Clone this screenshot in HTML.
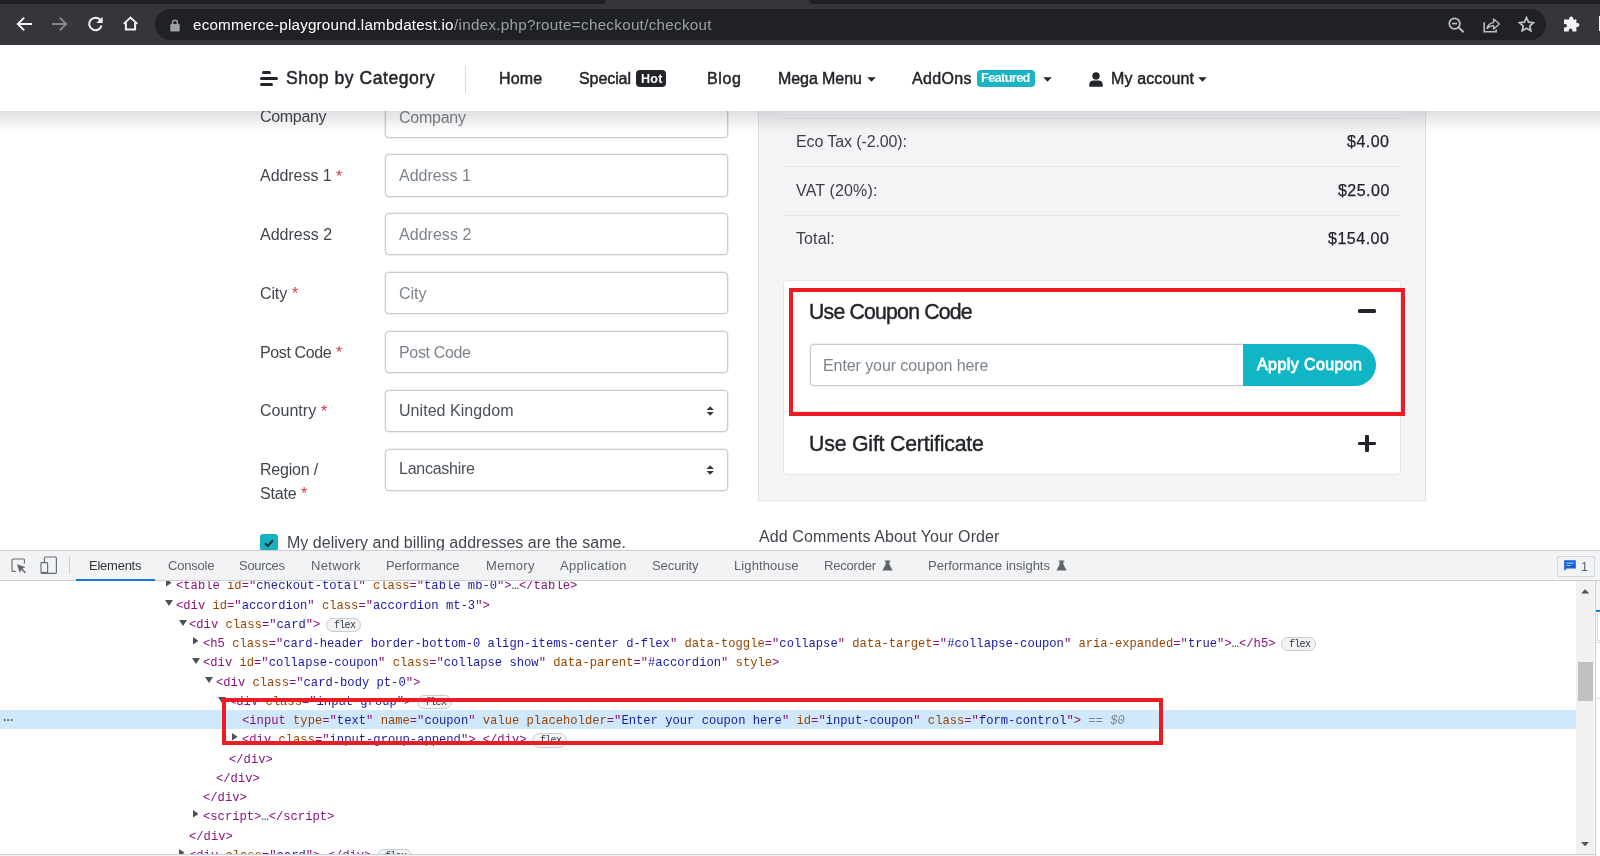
<!DOCTYPE html>
<html lang="en">
<head>
<meta charset="utf-8">
<title>Checkout</title>
<style>
html,body{margin:0;padding:0;background:#fff;}
body{width:1600px;height:856px;overflow:hidden;font-family:"Liberation Sans",sans-serif;}
#root{position:relative;width:1600px;height:856px;overflow:hidden;background:#fff;}
.t{will-change:transform;}
#root div,#root svg{position:absolute;box-sizing:border-box;}
.t{position:absolute;white-space:pre;font-family:"Liberation Sans",sans-serif;}
.inp{left:385px;width:343.3px;height:42.2px;border:1px solid #c6ccd3;border-radius:4px;background:#fff;box-shadow:0 0 0 .5px rgba(198,204,211,.6);}
.hl{left:783px;width:618px;height:1px;background:#e1e3e6;}
.pill{height:14.5px;border:1px solid #c9ccd0;border-radius:8px;background:#f1f3f4;}
</style>
</head>
<body>
<div id="root">
<!-- ===== page content (below nav) ===== -->
<!-- left form inputs -->
<div class="inp" style="top:95.5px"></div>
<div class="inp" style="top:154.4px"></div>
<div class="inp" style="top:213.3px"></div>
<div class="inp" style="top:272.1px"></div>
<div class="inp" style="top:331.0px"></div>
<div class="inp" style="top:389.6px"></div>
<div class="inp" style="top:448.7px"></div>
<!-- select arrows -->
<svg style="left:706.1px;top:405.7px" width="8.4" height="10" viewBox="0 0 10 12"><path d="M0.6 4.9 L5 0.4 L9.4 4.9 Z M0.6 7.1 L5 11.6 L9.4 7.1 Z" fill="#343a40"/></svg>
<svg style="left:706.1px;top:464.6px" width="8.4" height="10" viewBox="0 0 10 12"><path d="M0.6 4.9 L5 0.4 L9.4 4.9 Z M0.6 7.1 L5 11.6 L9.4 7.1 Z" fill="#343a40"/></svg>
<!-- checkbox -->
<div style="left:260px;top:533.5px;width:17.5px;height:17.5px;border-radius:3px;background:#18b1c4;"></div>
<svg style="left:260px;top:533.5px" width="18" height="18" viewBox="0 0 18 18"><path d="M5 9.2 L7.8 12 L13 6.2" fill="none" stroke="#16323a" stroke-width="2.2"/></svg>

<!-- right summary panel -->
<div style="left:758px;top:90px;width:668px;height:411px;background:#f4f4f6;border:1px solid #e1e3e7;"></div>
<div class="hl" style="top:118px"></div>
<div class="hl" style="top:166px"></div>
<div class="hl" style="top:215px"></div>
<!-- accordion card -->
<div style="left:783px;top:280.3px;width:618px;height:195.2px;background:#fff;border:1px solid #e4e6e9;border-radius:4px;"></div>
<div style="left:783px;top:411px;width:618px;height:1px;background:#e1e3e6;"></div>
<!-- minus / plus -->
<div style="left:1358px;top:308.8px;width:18px;height:4.4px;border-radius:1.5px;background:#212529;"></div>
<div style="left:1358.2px;top:441.6px;width:17.6px;height:3.8px;border-radius:1.2px;background:#212529;"></div>
<div style="left:1365.1px;top:434.7px;width:3.8px;height:17.6px;border-radius:1.2px;background:#212529;"></div>
<!-- coupon input + button -->
<div style="left:809.5px;top:344px;width:434.5px;height:42px;border:1px solid #c6ccd3;border-radius:4px 0 0 4px;background:#fff;box-shadow:0 0 0 .5px rgba(198,204,211,.6);"></div>
<div style="left:1243px;top:343.6px;width:133px;height:42.6px;border-radius:0 21.3px 21.3px 0;background:#10b6c6;"></div>
<!-- red highlight rect (page) -->
<div style="left:788.8px;top:288.1px;width:616.2px;height:128px;border:4px solid #ed1c24;"></div>

<!-- ===== nav header ===== -->
<div style="left:0;top:0;width:1600px;height:140px;z-index:3;pointer-events:none;">
<div style="left:0;top:111px;width:1600px;height:23px;background:linear-gradient(to bottom,rgba(30,36,48,.17) 0,rgba(30,36,48,.125) 1.2px,rgba(30,36,48,.115) 5px,rgba(30,36,48,.075) 10px,rgba(30,36,48,.035) 16px,rgba(30,36,48,.012) 20px,rgba(30,36,48,0) 23px);"></div>
<div style="left:0;top:44px;width:1600px;height:67px;background:#fff;"></div>
<!-- menu icon -->
<div style="left:261.5px;top:71.2px;width:9px;height:3.2px;border-radius:1.6px;background:#212529;"></div>
<div style="left:259.5px;top:77px;width:18px;height:3.2px;border-radius:1.6px;background:#212529;"></div>
<div style="left:259.5px;top:82.8px;width:13.5px;height:3.2px;border-radius:1.6px;background:#212529;"></div>
<div style="left:464.5px;top:65.5px;width:1px;height:27px;background:#d5d8dc;"></div>
<!-- badges -->
<div style="left:635.8px;top:70px;width:30.4px;height:17.2px;border-radius:4px;background:#212529;"></div>
<div style="left:976.7px;top:70px;width:58.5px;height:17.4px;border-radius:4px;background:#19b4c6;"></div>
<!-- carets -->
<svg style="left:867px;top:77px" width="9" height="5" viewBox="0 0 9 5"><path d="M0.3 0.3 H8.7 L4.5 4.8 Z" fill="#212529"/></svg>
<svg style="left:1043.3px;top:77px" width="9" height="5" viewBox="0 0 9 5"><path d="M0.3 0.3 H8.7 L4.5 4.8 Z" fill="#212529"/></svg>
<svg style="left:1198px;top:77px" width="9" height="5" viewBox="0 0 9 5"><path d="M0.3 0.3 H8.7 L4.5 4.8 Z" fill="#212529"/></svg>
<!-- user icon -->
<svg style="left:1088.5px;top:71.5px" width="14" height="15" viewBox="0 0 14 15"><circle cx="7" cy="3.9" r="3.7" fill="#212529"/><path d="M0.3 14.8 V12.3 C0.3 9.7 2.2 8.4 4.2 8.4 H9.8 C11.8 8.4 13.7 9.7 13.7 12.3 V14.8 Z" fill="#212529"/></svg>

<!-- ===== browser toolbar ===== -->
<div style="left:0;top:0;width:1600px;height:45px;background:#35363a;"></div>
<div style="left:0;top:0;width:606px;height:3.5px;background:#202124;border-radius:0 0 4px 0;"></div>
<div style="left:809px;top:0;width:791px;height:3.5px;background:#202124;border-radius:0 0 0 4px;"></div>
<div style="left:155px;top:9px;width:1391px;height:31px;border-radius:15.5px;background:#202124;"></div>
<!-- back -->
<svg style="left:16.3px;top:15.8px" width="17" height="16" viewBox="0 0 17 16"><path d="M16 8 H2.6 M8.2 1.6 L1.8 8 L8.2 14.4" fill="none" stroke="#f1f3f4" stroke-width="2"/></svg>
<!-- forward -->
<svg style="left:51px;top:15.8px" width="17" height="16" viewBox="0 0 17 16"><path d="M1 8 H14.4 M8.8 1.6 L15.2 8 L8.8 14.4" fill="none" stroke="#85888c" stroke-width="2"/></svg>
<!-- reload -->
<svg style="left:87px;top:16px" width="17" height="16" viewBox="0 0 17 16"><path d="M13.6 4.2 A6.3 6.3 0 1 0 14.6 9.6" fill="none" stroke="#f1f3f4" stroke-width="2"/><path d="M15.6 0.8 V7 H9.4 Z" fill="#f1f3f4"/></svg>
<!-- home -->
<svg style="left:123.3px;top:16.3px" width="15" height="15" viewBox="0 0 15 15"><path d="M0.7 7.9 L7.5 1.5 L14.3 7.9" fill="none" stroke="#f1f3f4" stroke-width="1.9"/><path d="M2.9 6.6 V13.6 H12.1 V6.6" fill="none" stroke="#f1f3f4" stroke-width="2"/></svg>
<!-- lock -->
<svg style="left:170px;top:18.5px" width="10" height="13" viewBox="0 0 10 13"><rect x="0.3" y="5" width="9.4" height="7.6" rx="1.2" fill="#9aa0a6"/><path d="M2.6 5.4 V3.6 A2.4 2.4 0 0 1 7.4 3.6 V5.4" fill="none" stroke="#9aa0a6" stroke-width="1.5"/></svg>
<!-- zoom-out magnifier -->
<svg style="left:1447.5px;top:16.5px" width="17" height="16" viewBox="0 0 17 16"><circle cx="6.6" cy="6.6" r="5.3" fill="none" stroke="#bdc1c6" stroke-width="1.7"/><path d="M10.6 10.4 L15.6 15.2" stroke="#bdc1c6" stroke-width="1.9"/><path d="M4 6.6 H9.2" stroke="#bdc1c6" stroke-width="1.6"/></svg>
<!-- share -->
<svg style="left:1483px;top:16.5px" width="18" height="16" viewBox="0 0 18 16"><path d="M1.2 5.2 V14.8 H13.2 V12.6" fill="none" stroke="#bdc1c6" stroke-width="1.5"/><path d="M4 11.6 C4.6 8 7 6 10.6 5.6 V2 L16.4 7 L10.6 12 V8.6 C7.8 8.6 5.6 9.6 4 11.6 Z" fill="none" stroke="#bdc1c6" stroke-width="1.4" stroke-linejoin="round"/></svg>
<!-- star -->
<svg style="left:1518.4px;top:16.3px" width="17" height="16" viewBox="0 0 18 17"><path d="M9 1.8 L11.2 6.6 L16.4 7.1 L12.5 10.6 L13.6 15.7 L9 13 L4.4 15.7 L5.5 10.6 L1.6 7.1 L6.8 6.6 Z" fill="none" stroke="#bdc1c6" stroke-width="1.9" stroke-linejoin="miter"/></svg>
<!-- puzzle -->
<svg style="left:1563px;top:16px" width="17" height="16" viewBox="0 0 17 16"><path d="M6.2 2.4 A2 2 0 0 1 10.2 2.4 V3.4 H13.4 V7 H14.4 A2 2 0 0 1 14.4 11 H13.4 V15.6 H9.4 V14.4 A1.8 1.8 0 0 0 5.8 14.4 V15.6 H1 V11.6 H2.2 A1.8 1.8 0 0 0 2.2 8 H1 V3.4 H6.2 Z" fill="#f1f3f4"/></svg>
<div style="left:1598.6px;top:16px;width:2px;height:15px;background:#f1f3f4;"></div>

</div>
<!-- ===== devtools ===== -->
<div style="left:0;top:550px;width:1600px;height:306px;background:#fff;"></div>
<div style="left:0;top:550px;width:1600px;height:31px;background:#f1f3f4;border-top:1px solid #cbcdd1;border-bottom:1px solid #cbcdd1;z-index:2;"></div>
<!-- inspect icons -->
<svg style="left:11px;top:558px;z-index:3" width="16" height="16" viewBox="0 0 16 16"><path d="M13.4 5.6 V2 A1 1 0 0 0 12.4 1 H2 A1 1 0 0 0 1 2 V12.4 A1 1 0 0 0 2 13.4 H4.6" fill="none" stroke="#6a6e73" stroke-width="1.15"/><path d="M5.9 6.2 L14.6 9.2 L11.3 10.5 L15 14.2 L13.9 15.3 L10.2 11.6 L8.9 14.9 Z" fill="#5f6368"/></svg>
<svg style="left:40px;top:556px;z-index:3" width="18" height="19" viewBox="0 0 18 19"><rect x="4.4" y="1" width="12" height="16.4" rx="1" fill="none" stroke="#6a6e73" stroke-width="1.15"/><rect x="1" y="6.6" width="6.6" height="10.8" rx="0.9" fill="#f1f3f4" stroke="#6a6e73" stroke-width="1.15"/><path d="M1 16.6 H7.6" stroke="#6a6e73" stroke-width="1.4"/></svg>
<div style="left:69px;top:557px;z-index:3;width:1px;height:17px;background:#cbcdd1;"></div>
<div style="left:76px;top:579.4px;z-index:3;width:79px;height:1.6px;background:#1a73e8;"></div>
<!-- flasks -->
<svg style="left:881.5px;top:560px;z-index:3" width="11" height="11" viewBox="0 0 11 11"><path d="M2.6 0.4 H8.4 V1.6 H7.4 V4.4 L10.6 10.6 H0.4 L3.6 4.4 V1.6 H2.6 Z" fill="#5f6368"/></svg>
<svg style="left:1056px;top:560px;z-index:3" width="11" height="11" viewBox="0 0 11 11"><path d="M2.6 0.4 H8.4 V1.6 H7.4 V4.4 L10.6 10.6 H0.4 L3.6 4.4 V1.6 H2.6 Z" fill="#5f6368"/></svg>
<!-- issues badge -->
<div style="left:1556.5px;top:555.5px;z-index:3;width:38px;height:21px;border:1px solid #d3d6da;border-radius:2px;background:#f1f3f4;"></div>
<svg style="left:1563.5px;top:560.3px;z-index:3" width="12" height="11" viewBox="0 0 12 11"><path d="M0.2 0.2 H11.8 V8.4 H2.6 L0.2 10.9 Z" fill="#1a5fe0"/><path d="M2.4 3.1 H9.6 M2.4 5.5 H7" stroke="#9fc0f7" stroke-width="1.2"/></svg>

<!-- selected row -->
<div style="left:0;top:710px;width:1576.5px;height:18.7px;background:#cfe8fc;"></div>
<!-- scrollbar -->
<div style="left:1576.2px;top:581px;width:18.3px;height:273px;background:#f1f1f1;"></div>
<div style="left:1578px;top:662px;width:15px;height:38.5px;background:#c1c1c1;"></div>
<svg style="left:1581.3px;top:589.4px" width="8.2" height="4.4" viewBox="0 0 9 5"><path d="M0 5 L4.5 0.2 L9 5 Z" fill="#505050"/></svg>
<svg style="left:1581.3px;top:841.8px" width="8.2" height="4.4" viewBox="0 0 9 5"><path d="M0 0 L4.5 4.8 L9 0 Z" fill="#505050"/></svg>
<!-- right sliver pane -->
<div style="left:1594.5px;top:581px;width:6px;height:275px;background:#fff;border-left:1px solid #cbcdd1;"></div>
<div style="left:1595.5px;top:581px;width:5px;height:29px;background:#f1f3f4;"></div>
<div style="left:1595.5px;top:609.5px;width:5px;height:2px;background:#1a73e8;"></div>
<div style="left:1596.5px;top:613px;width:4px;height:28px;background:#fff;border:1px solid #d8dadd;border-right:0;"></div>
<div style="left:1595.5px;top:641.5px;width:5px;height:1px;background:#d8dadd;"></div>
<div style="left:1595.5px;top:698px;width:5px;height:1px;background:#d8dadd;"></div>
<div style="left:0;top:854px;width:1595px;height:2px;background:#f1f3f4;border-top:1px solid #cdd0d5;z-index:2;"></div>

<svg style="left:166.2px;top:579.2px" width="5.6" height="7.6" viewBox="0 0 6 8"><path d="M0 0 V8 L6 4 Z" fill="#4d5156"/></svg>
<svg style="left:165.4px;top:600.3px" width="8" height="6" viewBox="0 0 8 6"><path d="M0 0 H8 L4 6 Z" fill="#4d5156"/></svg>
<svg style="left:178.6px;top:619.5px" width="8" height="6" viewBox="0 0 8 6"><path d="M0 0 H8 L4 6 Z" fill="#4d5156"/></svg>
<div class="pill" style="left:326.3px;top:617.5px;width:35px;"></div>
<svg style="left:192.6px;top:637.0px" width="5.6" height="7.6" viewBox="0 0 6 8"><path d="M0 0 V8 L6 4 Z" fill="#4d5156"/></svg>
<div class="pill" style="left:1281.1px;top:636.8px;width:35px;"></div>
<svg style="left:191.8px;top:658.0px" width="8" height="6" viewBox="0 0 8 6"><path d="M0 0 H8 L4 6 Z" fill="#4d5156"/></svg>
<svg style="left:204.9px;top:677.3px" width="8" height="6" viewBox="0 0 8 6"><path d="M0 0 H8 L4 6 Z" fill="#4d5156"/></svg>
<svg style="left:218.0px;top:696.5px" width="8" height="6" viewBox="0 0 8 6"><path d="M0 0 H8 L4 6 Z" fill="#4d5156"/></svg>
<div class="pill" style="left:416.9px;top:694.5px;width:35px;"></div>
<svg style="left:232.0px;top:733.2px" width="5.6" height="7.6" viewBox="0 0 6 8"><path d="M0 0 V8 L6 4 Z" fill="#4d5156"/></svg>
<div class="pill" style="left:532.2px;top:733.0px;width:35px;"></div>
<svg style="left:192.6px;top:810.2px" width="5.6" height="7.6" viewBox="0 0 6 8"><path d="M0 0 V8 L6 4 Z" fill="#4d5156"/></svg>
<svg style="left:179.4px;top:848.8px" width="5.6" height="7.6" viewBox="0 0 6 8"><path d="M0 0 V8 L6 4 Z" fill="#4d5156"/></svg>
<div class="pill" style="left:377.4px;top:848.5px;width:35px;"></div>
<div style="left:221.9px;top:698.3px;width:941px;height:46.6px;border:4px solid #ed1c24;z-index:3;"></div>

<span class="t" style="left:193.00px;top:17.10px;font-size:15.2px;line-height:15.2px;color:#ffffff;letter-spacing:0.194px;z-index:5;">ecommerce-playground.lambdatest.io</span>
<span class="t" style="left:453.50px;top:17.10px;font-size:15.2px;line-height:15.2px;color:#9aa0a6;letter-spacing:0.293px;z-index:5;">/index.php?route=checkout/checkout</span>
<span class="t" style="left:286.00px;top:70.40px;font-size:17.6px;line-height:17.6px;color:#212529;letter-spacing:0.510px;z-index:4;-webkit-text-stroke:.45px #212529;">Shop by Category</span>
<span class="t" style="left:498.80px;top:70.70px;font-size:16px;line-height:16px;color:#212529;letter-spacing:0.171px;z-index:4;-webkit-text-stroke:.45px #212529;">Home</span>
<span class="t" style="left:579.00px;top:70.70px;font-size:16px;line-height:16px;color:#212529;letter-spacing:-0.081px;z-index:4;-webkit-text-stroke:.45px #212529;">Special</span>
<span class="t" style="left:640.80px;top:72.90px;font-size:12.6px;line-height:12.6px;color:#ffffff;font-weight:700;letter-spacing:0.208px;z-index:4;">Hot</span>
<span class="t" style="left:706.60px;top:70.70px;font-size:16px;line-height:16px;color:#212529;letter-spacing:0.656px;z-index:4;-webkit-text-stroke:.45px #212529;">Blog</span>
<span class="t" style="left:777.80px;top:70.70px;font-size:16px;line-height:16px;color:#212529;letter-spacing:-0.075px;z-index:4;-webkit-text-stroke:.45px #212529;">Mega Menu</span>
<span class="t" style="left:912.30px;top:70.70px;font-size:16px;line-height:16px;color:#212529;letter-spacing:0.338px;z-index:4;-webkit-text-stroke:.45px #212529;">AddOns</span>
<span class="t" style="left:981.40px;top:72.30px;font-size:12.8px;line-height:12.8px;color:#ffffff;font-weight:700;letter-spacing:-0.664px;z-index:4;">Featured</span>
<span class="t" style="left:1111.00px;top:70.70px;font-size:16px;line-height:16px;color:#212529;letter-spacing:0.121px;z-index:4;-webkit-text-stroke:.45px #212529;">My account</span>
<span class="t" style="left:260.30px;top:108.70px;font-size:16px;line-height:16px;color:#40464d;letter-spacing:-0.314px;">Company</span>
<span class="t" style="left:398.50px;top:109.70px;font-size:16px;line-height:16px;color:#7b838b;letter-spacing:-0.247px;">Company</span>
<span class="t" style="left:260.30px;top:167.70px;font-size:16px;line-height:16px;color:#40464d;letter-spacing:-0.043px;">Address 1</span>
<span class="t" style="left:336.00px;top:168.70px;font-size:16px;line-height:16px;color:#dc3545;">*</span>
<span class="t" style="left:398.50px;top:167.70px;font-size:16px;line-height:16px;color:#7b838b;letter-spacing:-0.031px;">Address 1</span>
<span class="t" style="left:260.30px;top:226.70px;font-size:16px;line-height:16px;color:#40464d;letter-spacing:0.019px;">Address 2</span>
<span class="t" style="left:398.50px;top:226.70px;font-size:16px;line-height:16px;color:#7b838b;letter-spacing:0.032px;">Address 2</span>
<span class="t" style="left:260.30px;top:285.70px;font-size:16px;line-height:16px;color:#40464d;letter-spacing:-0.121px;">City</span>
<span class="t" style="left:291.50px;top:285.70px;font-size:16px;line-height:16px;color:#dc3545;">*</span>
<span class="t" style="left:398.50px;top:285.70px;font-size:16px;line-height:16px;color:#7b838b;letter-spacing:-0.021px;">City</span>
<span class="t" style="left:260.30px;top:344.70px;font-size:16px;line-height:16px;color:#40464d;letter-spacing:-0.377px;">Post Code</span>
<span class="t" style="left:336.00px;top:344.70px;font-size:16px;line-height:16px;color:#dc3545;">*</span>
<span class="t" style="left:398.50px;top:344.70px;font-size:16px;line-height:16px;color:#7b838b;letter-spacing:-0.340px;">Post Code</span>
<span class="t" style="left:260.30px;top:402.70px;font-size:16px;line-height:16px;color:#40464d;letter-spacing:0.028px;">Country</span>
<span class="t" style="left:320.50px;top:403.70px;font-size:16px;line-height:16px;color:#dc3545;">*</span>
<span class="t" style="left:398.50px;top:402.70px;font-size:16px;line-height:16px;color:#495057;letter-spacing:0.050px;">United Kingdom</span>
<span class="t" style="left:260.30px;top:461.70px;font-size:16px;line-height:16px;color:#40464d;letter-spacing:-0.199px;">Region /</span>
<span class="t" style="left:260.30px;top:485.70px;font-size:16px;line-height:16px;color:#40464d;letter-spacing:-0.165px;">State</span>
<span class="t" style="left:301.00px;top:485.70px;font-size:16px;line-height:16px;color:#dc3545;">*</span>
<span class="t" style="left:398.50px;top:460.70px;font-size:16px;line-height:16px;color:#495057;letter-spacing:-0.253px;">Lancashire</span>
<span class="t" style="left:287.40px;top:534.70px;font-size:16px;line-height:16px;color:#40464d;letter-spacing:0.021px;">My delivery and billing addresses are the same.</span>
<span class="t" style="left:795.60px;top:133.70px;font-size:16px;line-height:16px;color:#3a3f45;letter-spacing:-0.109px;">Eco Tax (-2.00):</span>
<span class="t" style="left:795.60px;top:182.70px;font-size:16px;line-height:16px;color:#3a3f45;letter-spacing:0.152px;">VAT (20%):</span>
<span class="t" style="left:795.60px;top:230.70px;font-size:16px;line-height:16px;color:#3a3f45;letter-spacing:0.110px;">Total:</span>
<span class="t" style="left:1347.30px;top:133.70px;font-size:16px;line-height:16px;color:#212529;letter-spacing:0.488px;-webkit-text-stroke:.25px #212529;">$4.00</span>
<span class="t" style="left:1338.00px;top:182.70px;font-size:16px;line-height:16px;color:#212529;letter-spacing:0.472px;-webkit-text-stroke:.25px #212529;">$25.00</span>
<span class="t" style="left:1328.40px;top:230.70px;font-size:16px;line-height:16px;color:#212529;letter-spacing:0.509px;-webkit-text-stroke:.25px #212529;">$154.00</span>
<span class="t" style="left:809.10px;top:301.55px;font-size:21.3px;line-height:21.3px;color:#212529;letter-spacing:-0.824px;-webkit-text-stroke:.4px #212529;">Use Coupon Code</span>
<span class="t" style="left:809.10px;top:433.55px;font-size:21.3px;line-height:21.3px;color:#212529;letter-spacing:-0.201px;-webkit-text-stroke:.4px #212529;">Use Gift Certificate</span>
<span class="t" style="left:823.00px;top:357.70px;font-size:16px;line-height:16px;color:#7b838b;letter-spacing:-0.082px;">Enter your coupon here</span>
<span class="t" style="left:1257.00px;top:356.70px;font-size:16px;line-height:16px;color:#ffffff;letter-spacing:0.408px;-webkit-text-stroke:.8px #ffffff;">Apply Coupon</span>
<span class="t" style="left:758.60px;top:528.70px;font-size:16px;line-height:16px;color:#40464d;letter-spacing:0.105px;">Add Comments About Your Order</span>
<span class="t" style="left:89.00px;top:559.20px;font-size:13px;line-height:13px;color:#333639;letter-spacing:-0.243px;z-index:3;">Elements</span>
<span class="t" style="left:167.50px;top:559.20px;font-size:13px;line-height:13px;color:#5f6368;letter-spacing:-0.201px;z-index:3;">Console</span>
<span class="t" style="left:239.00px;top:559.20px;font-size:13px;line-height:13px;color:#5f6368;letter-spacing:-0.284px;z-index:3;">Sources</span>
<span class="t" style="left:310.50px;top:559.20px;font-size:13px;line-height:13px;color:#5f6368;letter-spacing:0.302px;z-index:3;">Network</span>
<span class="t" style="left:385.50px;top:559.20px;font-size:13px;line-height:13px;color:#5f6368;letter-spacing:-0.092px;z-index:3;">Performance</span>
<span class="t" style="left:485.50px;top:559.20px;font-size:13px;line-height:13px;color:#5f6368;letter-spacing:0.309px;z-index:3;">Memory</span>
<span class="t" style="left:559.50px;top:559.20px;font-size:13px;line-height:13px;color:#5f6368;letter-spacing:0.289px;z-index:3;">Application</span>
<span class="t" style="left:651.50px;top:559.20px;font-size:13px;line-height:13px;color:#5f6368;letter-spacing:-0.067px;z-index:3;">Security</span>
<span class="t" style="left:734.00px;top:559.20px;font-size:13px;line-height:13px;color:#5f6368;letter-spacing:0.097px;z-index:3;">Lighthouse</span>
<span class="t" style="left:823.50px;top:559.20px;font-size:13px;line-height:13px;color:#5f6368;letter-spacing:-0.210px;z-index:3;">Recorder</span>
<span class="t" style="left:928.00px;top:559.20px;font-size:13px;line-height:13px;color:#5f6368;letter-spacing:-0.007px;z-index:3;">Performance insights</span>
<span class="t" style="left:1580.50px;top:560.95px;font-size:12.5px;line-height:12.5px;color:#5f6368;z-index:3;">1</span>
<span class="t" style="left:3.00px;top:714.20px;font-size:12px;line-height:12px;color:#5f6368;font-weight:700;letter-spacing:-0.500px;">···</span>
<span class="t" style="left:176.25px;top:580.12px;font-size:12.17px;line-height:12.17px;color:#881280;font-family:'Liberation Mono', monospace;z-index:1;"><span style="color:#881280">&lt;table</span><span style="color:#994500"> id</span><span style="color:#881280">=&quot;</span><span style="color:#1a1aa6">checkout-total</span><span style="color:#881280">&quot;</span><span style="color:#994500"> class</span><span style="color:#881280">=&quot;</span><span style="color:#1a1aa6">table mb-0</span><span style="color:#881280">&quot;</span><span style="color:#881280">&gt;</span><span style="color:#303942">…</span><span style="color:#881280">&lt;/table</span><span style="color:#881280">&gt;</span></span>
<span class="t" style="left:176.25px;top:600.12px;font-size:12.17px;line-height:12.17px;color:#881280;font-family:'Liberation Mono', monospace;z-index:1;"><span style="color:#881280">&lt;div</span><span style="color:#994500"> id</span><span style="color:#881280">=&quot;</span><span style="color:#1a1aa6">accordion</span><span style="color:#881280">&quot;</span><span style="color:#994500"> class</span><span style="color:#881280">=&quot;</span><span style="color:#1a1aa6">accordion mt-3</span><span style="color:#881280">&quot;</span><span style="color:#881280">&gt;</span></span>
<span class="t" style="left:189.40px;top:619.12px;font-size:12.17px;line-height:12.17px;color:#881280;font-family:'Liberation Mono', monospace;z-index:1;"><span style="color:#881280">&lt;div</span><span style="color:#994500"> class</span><span style="color:#881280">=&quot;</span><span style="color:#1a1aa6">card</span><span style="color:#881280">&quot;</span><span style="color:#881280">&gt;</span></span>
<span class="t" style="left:334.00px;top:620.70px;font-size:10px;line-height:10px;color:#303942;font-family:'Liberation Mono', monospace;letter-spacing:-0.705px;z-index:1;">flex</span>
<span class="t" style="left:202.55px;top:638.12px;font-size:12.17px;line-height:12.17px;color:#881280;font-family:'Liberation Mono', monospace;z-index:1;"><span style="color:#881280">&lt;h5</span><span style="color:#994500"> class</span><span style="color:#881280">=&quot;</span><span style="color:#1a1aa6">card-header border-bottom-0 align-items-center d-flex</span><span style="color:#881280">&quot;</span><span style="color:#994500"> data-toggle</span><span style="color:#881280">=&quot;</span><span style="color:#1a1aa6">collapse</span><span style="color:#881280">&quot;</span><span style="color:#994500"> data-target</span><span style="color:#881280">=&quot;</span><span style="color:#1a1aa6">#collapse-coupon</span><span style="color:#881280">&quot;</span><span style="color:#994500"> aria-expanded</span><span style="color:#881280">=&quot;</span><span style="color:#1a1aa6">true</span><span style="color:#881280">&quot;</span><span style="color:#881280">&gt;</span><span style="color:#303942">…</span><span style="color:#881280">&lt;/h5</span><span style="color:#881280">&gt;</span></span>
<span class="t" style="left:1288.85px;top:639.70px;font-size:10px;line-height:10px;color:#303942;font-family:'Liberation Mono', monospace;letter-spacing:-0.705px;z-index:1;">flex</span>
<span class="t" style="left:202.55px;top:657.12px;font-size:12.17px;line-height:12.17px;color:#881280;font-family:'Liberation Mono', monospace;z-index:1;"><span style="color:#881280">&lt;div</span><span style="color:#994500"> id</span><span style="color:#881280">=&quot;</span><span style="color:#1a1aa6">collapse-coupon</span><span style="color:#881280">&quot;</span><span style="color:#994500"> class</span><span style="color:#881280">=&quot;</span><span style="color:#1a1aa6">collapse show</span><span style="color:#881280">&quot;</span><span style="color:#994500"> data-parent</span><span style="color:#881280">=&quot;</span><span style="color:#1a1aa6">#accordion</span><span style="color:#881280">&quot;</span><span style="color:#994500"> style</span><span style="color:#881280">&gt;</span></span>
<span class="t" style="left:215.70px;top:677.12px;font-size:12.17px;line-height:12.17px;color:#881280;font-family:'Liberation Mono', monospace;z-index:1;"><span style="color:#881280">&lt;div</span><span style="color:#994500"> class</span><span style="color:#881280">=&quot;</span><span style="color:#1a1aa6">card-body pt-0</span><span style="color:#881280">&quot;</span><span style="color:#881280">&gt;</span></span>
<span class="t" style="left:228.85px;top:696.12px;font-size:12.17px;line-height:12.17px;color:#881280;font-family:'Liberation Mono', monospace;z-index:1;"><span style="color:#881280">&lt;div</span><span style="color:#994500"> class</span><span style="color:#881280">=&quot;</span><span style="color:#1a1aa6">input-group</span><span style="color:#881280">&quot;</span><span style="color:#881280">&gt;</span></span>
<span class="t" style="left:424.55px;top:697.70px;font-size:10px;line-height:10px;color:#303942;font-family:'Liberation Mono', monospace;letter-spacing:-0.705px;z-index:1;">flex</span>
<span class="t" style="left:242.00px;top:715.12px;font-size:12.17px;line-height:12.17px;color:#881280;font-family:'Liberation Mono', monospace;z-index:1;"><span style="color:#881280">&lt;input</span><span style="color:#994500"> type</span><span style="color:#881280">=&quot;</span><span style="color:#1a1aa6">text</span><span style="color:#881280">&quot;</span><span style="color:#994500"> name</span><span style="color:#881280">=&quot;</span><span style="color:#1a1aa6">coupon</span><span style="color:#881280">&quot;</span><span style="color:#994500"> value</span><span style="color:#994500"> placeholder</span><span style="color:#881280">=&quot;</span><span style="color:#1a1aa6">Enter your coupon here</span><span style="color:#881280">&quot;</span><span style="color:#994500"> id</span><span style="color:#881280">=&quot;</span><span style="color:#1a1aa6">input-coupon</span><span style="color:#881280">&quot;</span><span style="color:#994500"> class</span><span style="color:#881280">=&quot;</span><span style="color:#1a1aa6">form-control</span><span style="color:#881280">&quot;</span><span style="color:#881280">&gt;</span><span style="color:#80868b;font-style:italic"> == $0</span></span>
<span class="t" style="left:242.00px;top:734.12px;font-size:12.17px;line-height:12.17px;color:#881280;font-family:'Liberation Mono', monospace;z-index:1;"><span style="color:#881280">&lt;div</span><span style="color:#994500"> class</span><span style="color:#881280">=&quot;</span><span style="color:#1a1aa6">input-group-append</span><span style="color:#881280">&quot;</span><span style="color:#881280">&gt;</span><span style="color:#303942">…</span><span style="color:#881280">&lt;/div</span><span style="color:#881280">&gt;</span></span>
<span class="t" style="left:539.90px;top:735.70px;font-size:10px;line-height:10px;color:#303942;font-family:'Liberation Mono', monospace;letter-spacing:-0.705px;z-index:1;">flex</span>
<span class="t" style="left:228.85px;top:754.12px;font-size:12.17px;line-height:12.17px;color:#881280;font-family:'Liberation Mono', monospace;z-index:1;"><span style="color:#881280">&lt;/div</span><span style="color:#881280">&gt;</span></span>
<span class="t" style="left:215.70px;top:773.12px;font-size:12.17px;line-height:12.17px;color:#881280;font-family:'Liberation Mono', monospace;z-index:1;"><span style="color:#881280">&lt;/div</span><span style="color:#881280">&gt;</span></span>
<span class="t" style="left:202.55px;top:792.12px;font-size:12.17px;line-height:12.17px;color:#881280;font-family:'Liberation Mono', monospace;z-index:1;"><span style="color:#881280">&lt;/div</span><span style="color:#881280">&gt;</span></span>
<span class="t" style="left:202.55px;top:811.12px;font-size:12.17px;line-height:12.17px;color:#881280;font-family:'Liberation Mono', monospace;z-index:1;"><span style="color:#881280">&lt;script</span><span style="color:#881280">&gt;</span><span style="color:#303942">…</span><span style="color:#881280">&lt;/script</span><span style="color:#881280">&gt;</span></span>
<span class="t" style="left:189.40px;top:831.12px;font-size:12.17px;line-height:12.17px;color:#881280;font-family:'Liberation Mono', monospace;z-index:1;"><span style="color:#881280">&lt;/div</span><span style="color:#881280">&gt;</span></span>
<span class="t" style="left:189.40px;top:850.12px;font-size:12.17px;line-height:12.17px;color:#881280;font-family:'Liberation Mono', monospace;z-index:1;"><span style="color:#881280">&lt;div</span><span style="color:#994500"> class</span><span style="color:#881280">=&quot;</span><span style="color:#1a1aa6">card</span><span style="color:#881280">&quot;</span><span style="color:#881280">&gt;</span><span style="color:#303942">…</span><span style="color:#881280">&lt;/div</span><span style="color:#881280">&gt;</span></span>
<span class="t" style="left:385.10px;top:851.70px;font-size:10px;line-height:10px;color:#303942;font-family:'Liberation Mono', monospace;letter-spacing:-0.705px;z-index:1;">flex</span>
</div>
</body>
</html>
